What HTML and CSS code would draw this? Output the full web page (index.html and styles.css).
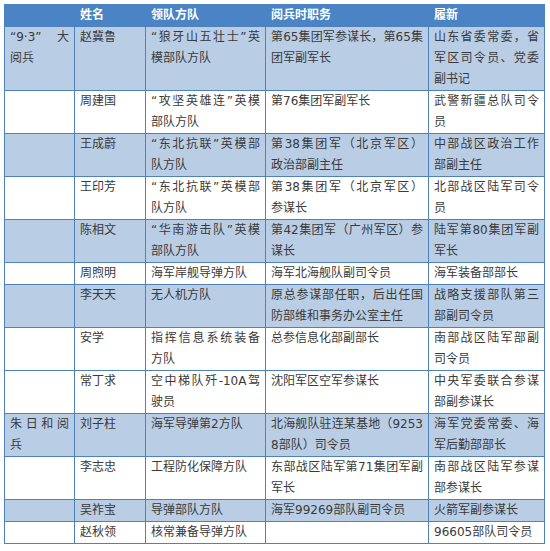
FILE: index.html
```html
<!DOCTYPE html>
<html lang="zh-CN">
<head>
<meta charset="utf-8">
<link rel="stylesheet" href="styles.css">
</head>
<body>
<table class="tbl">
<colgroup>
<col class="c1"><col class="c2"><col class="c3"><col class="c4"><col class="c5">
</colgroup>
<thead>
<tr><th></th><th>姓名</th><th>领队方队</th><th>阅兵时职务</th><th>履新</th></tr>
</thead>
<tbody>
<tr class="alt">
<td><span class="ln j">“9·3” 大</span><span class="ln">阅兵</span></td>
<td>赵冀鲁</td>
<td><span class="ln j">“狼牙山五壮士”英</span><span class="ln">模部队方队</span></td>
<td><span class="ln j">第65集团军参谋长，第65集</span><span class="ln">团军副军长</span></td>
<td><span class="ln j">山东省委常委，省</span><span class="ln j">军区司令员、党委</span><span class="ln">副书记</span></td>
</tr>
<tr>
<td></td>
<td>周建国</td>
<td><span class="ln j">“攻坚英雄连”英模</span><span class="ln">部队方队</span></td>
<td><span class="ln">第76集团军副军长</span></td>
<td><span class="ln j">武警新疆总队司令</span><span class="ln">员</span></td>
</tr>
<tr class="alt">
<td></td>
<td>王成蔚</td>
<td><span class="ln j">“东北抗联”英模部</span><span class="ln">队方队</span></td>
<td><span class="ln j">第38集团军（北京军区）</span><span class="ln">政治部副主任</span></td>
<td><span class="ln j">中部战区政治工作</span><span class="ln">部副主任</span></td>
</tr>
<tr>
<td></td>
<td>王印芳</td>
<td><span class="ln j">“东北抗联”英模部</span><span class="ln">队方队</span></td>
<td><span class="ln j">第38集团军（北京军区）</span><span class="ln">参谋长</span></td>
<td><span class="ln j">北部战区陆军司令</span><span class="ln">员</span></td>
</tr>
<tr class="alt">
<td></td>
<td>陈相文</td>
<td><span class="ln j">“华南游击队”英模</span><span class="ln">部队方队</span></td>
<td><span class="ln j">第42集团军（广州军区）参</span><span class="ln">谋长</span></td>
<td><span class="ln j">陆军第80集团军副</span><span class="ln">军长</span></td>
</tr>
<tr>
<td></td>
<td>周煦明</td>
<td>海军岸舰导弹方队</td>
<td>海军北海舰队副司令员</td>
<td>海军装备部部长</td>
</tr>
<tr class="alt">
<td></td>
<td>李天天</td>
<td>无人机方队</td>
<td><span class="ln j">原总参谋部任职，后出任国</span><span class="ln">防部维和事务办公室主任</span></td>
<td><span class="ln j">战略支援部队第三</span><span class="ln">部副司令员</span></td>
</tr>
<tr>
<td></td>
<td>安学</td>
<td><span class="ln j">指挥信息系统装备</span><span class="ln">方队</span></td>
<td>总参信息化部副部长</td>
<td><span class="ln j">南部战区陆军部副</span><span class="ln">司令员</span></td>
</tr>
<tr>
<td></td>
<td>常丁求</td>
<td><span class="ln j">空中梯队歼-10A驾</span><span class="ln">驶员</span></td>
<td>沈阳军区空军参谋长</td>
<td><span class="ln j">中央军委联合参谋</span><span class="ln">部副参谋长</span></td>
</tr>
<tr class="alt">
<td><span class="ln j">朱日和阅</span><span class="ln">兵</span></td>
<td>刘子柱</td>
<td>海军导弹第2方队</td>
<td><span class="ln j">北海舰队驻连某基地（9253</span><span class="ln">8部队）司令员</span></td>
<td><span class="ln j">海军党委常委、海</span><span class="ln">军后勤部部长</span></td>
</tr>
<tr>
<td></td>
<td>李志忠</td>
<td>工程防化保障方队</td>
<td><span class="ln j">东部战区陆军第71集团军副</span><span class="ln">军长</span></td>
<td><span class="ln j">南部战区陆军参谋</span><span class="ln">部参谋长</span></td>
</tr>
<tr class="alt">
<td></td>
<td>吴祚宝</td>
<td>导弹部队方队</td>
<td>海军99269部队副司令员</td>
<td>火箭军副参谋长</td>
</tr>
<tr>
<td></td>
<td>赵秋领</td>
<td>核常兼备导弹方队</td>
<td></td>
<td>96605部队司令员</td>
</tr>
</tbody>
</table>
</body>
</html>
```

FILE: styles.css
```css
html, body {
  margin: 0;
  padding: 0;
  background: #ffffff;
}

.tbl {
  margin: 4px 0 0 4px;
  width: 540px;
  table-layout: fixed;
  border-collapse: collapse;
  font-family: "DejaVu Sans", "Noto Sans CJK SC", sans-serif;
  font-size: 12px;
  line-height: 21px;
  color: #3a3a3a;
}

.c1 { width: 70px; }
.c2 { width: 71px; }
.c3 { width: 120px; }
.c4 { width: 163px; }
.c5 { width: 116px; }

.tbl th {
  background: #4a84c4;
  color: #ffffff;
  font-weight: bold;
  text-align: left;
  padding: 0 5px;
  height: 21px;
  border: 1px solid #4a84c4;
  border-bottom-color: #4f81bd;
}

.tbl td {
  vertical-align: top;
  text-align: left;
  padding: 0 5px;
  height: 21px;
  border: 1px solid #4f81bd;
  white-space: nowrap;
}

.tbl tr.alt td {
  background: #b9cde5;
}

.ln {
  display: block;
}

.j {
  text-align: justify;
  text-align-last: justify;
}
```
